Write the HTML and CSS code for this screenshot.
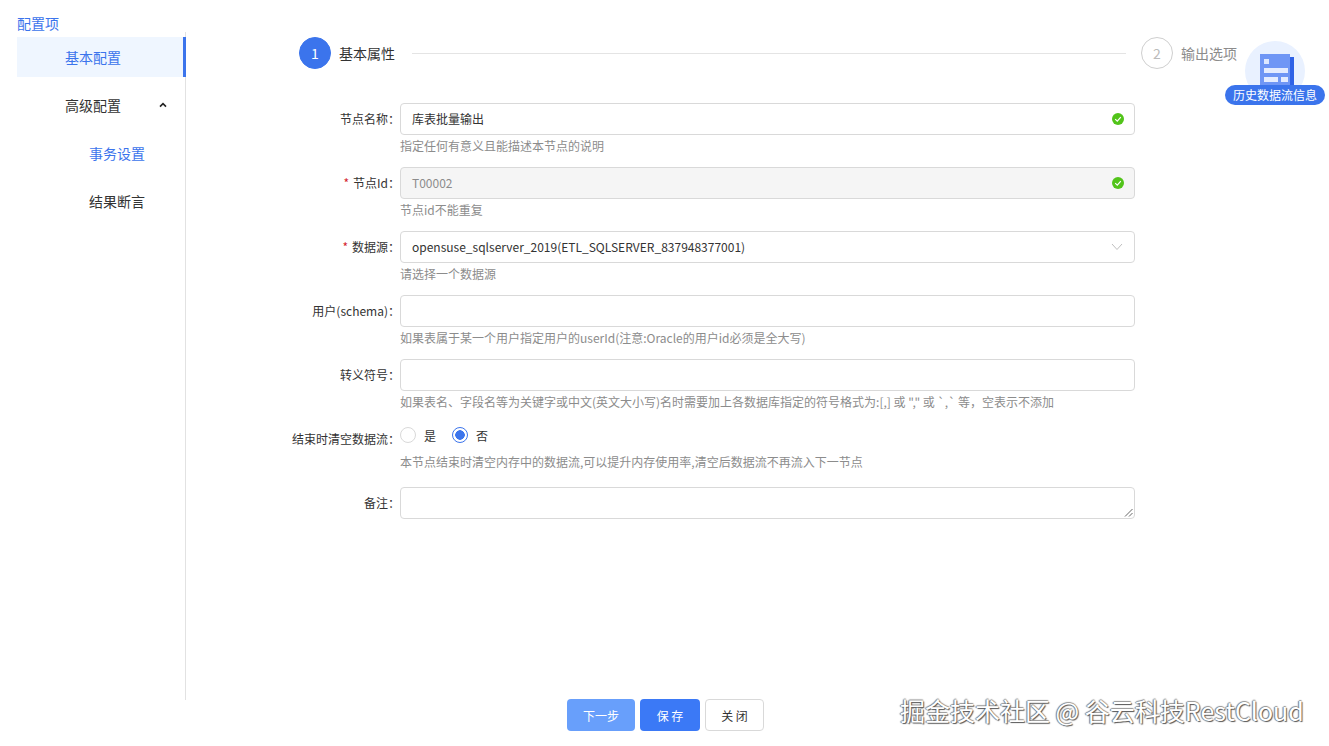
FILE: index.html
```html
<!DOCTYPE html>
<html>
  <head>
    <title>配置项</title>

    <link rel="stylesheet" href="styles.css">
  </head>

  <body>
    <div id="container">
      <aside class="sidebar">
        <div class="sidebarTitle">配置项</div>
        <nav class="menu">
          <div class="menuItem active">基本配置</div>
          <div class="menuItem">
            高级配置
            <svg class="caret" viewBox="0 0 8 6" width="8" height="6">
              <path d="M1 4.6 L4 1.6 L7 4.6" fill="none" stroke="#222" stroke-width="1.6"/>
            </svg>
          </div>
          <div class="menuItem sub current">事务设置</div>
          <div class="menuItem sub">结果断言</div>
        </nav>
      </aside>

      <main class="content">
        <div class="steps">
          <div class="stepNum on">1</div>
          <div class="stepText">基本属性</div>
          <div class="stepLine"></div>
          <div class="stepNum">2</div>
          <div class="stepText muted">输出选项</div>
        </div>

        <form class="form">
          <div class="row">
            <label class="label">节点名称：</label>
            <div class="field">
              <div class="input">库表批量输出
                <svg class="check" viewBox="0 0 12 12" width="12" height="12">
                  <circle cx="6" cy="6" r="6" fill="#52c41a"/>
                  <path d="M3.2 6.1 L5.3 8.1 L8.8 4.2" fill="none" stroke="#fff" stroke-width="1.2"/>
                </svg>
              </div>
              <div class="help">指定任何有意义且能描述本节点的说明</div>
            </div>
          </div>

          <div class="row">
            <label class="label"><span class="req">*</span>节点Id：</label>
            <div class="field">
              <div class="input disabled">T00002
                <svg class="check" viewBox="0 0 12 12" width="12" height="12">
                  <circle cx="6" cy="6" r="6" fill="#52c41a"/>
                  <path d="M3.2 6.1 L5.3 8.1 L8.8 4.2" fill="none" stroke="#fff" stroke-width="1.2"/>
                </svg>
              </div>
              <div class="help">节点id不能重复</div>
            </div>
          </div>

          <div class="row">
            <label class="label"><span class="req">*</span>数据源：</label>
            <div class="field">
              <div class="input">opensuse_sqlserver_2019(ETL_SQLSERVER_837948377001)
                <svg class="arrow" viewBox="0 0 12 8" width="12" height="8">
                  <path d="M1 1 L6 6.5 L11 1" fill="none" stroke="#bfbfbf" stroke-width="1"/>
                </svg>
              </div>
              <div class="help">请选择一个数据源</div>
            </div>
          </div>

          <div class="row">
            <label class="label">用户(schema)：</label>
            <div class="field">
              <div class="input"></div>
              <div class="help">如果表属于某一个用户指定用户的userId(注意:Oracle的用户id必须是全大写)</div>
            </div>
          </div>

          <div class="row">
            <label class="label">转义符号：</label>
            <div class="field">
              <div class="input"></div>
              <div class="help">如果表名、字段名等为关键字或中文(英文大小写)名时需要加上各数据库指定的符号格式为:[,] 或 "," 或 `,` 等，空表示不添加</div>
            </div>
          </div>

          <div class="row">
            <label class="label">结束时清空数据流：</label>
            <div class="field">
              <div class="radios">
                <span class="radio"></span><span class="radioText">是</span>
                <span class="radio checked"></span><span class="radioText">否</span>
              </div>
              <div class="help">本节点结束时清空内存中的数据流,可以提升内存使用率,清空后数据流不再流入下一节点</div>
            </div>
          </div>

          <div class="row">
            <label class="label">备注：</label>
            <div class="field">
              <div class="input textarea">
                <svg class="grip" viewBox="0 0 9 9" width="9" height="9">
                  <path d="M1 8.5 L8.5 1 M5 8.5 L8.5 5" stroke="#666" stroke-width="1"/>
                </svg>
              </div>
            </div>
          </div>
        </form>
      </main>
    </div>

    <div class="footer">
      <button class="btn next">下一步</button>
      <button class="btn save">保 存</button>
      <button class="btn close">关 闭</button>
    </div>

    <div class="history">
      <div class="historyCircle">
        <svg viewBox="0 0 36 36" width="36" height="36">
          <rect x="30" y="4" width="5" height="32" fill="#2f62e6"/>
          <rect x="1" y="1" width="30" height="35" fill="#6f96f5"/>
          <rect x="5" y="6" width="5" height="5" fill="#dce7ff"/>
          <rect x="5" y="15" width="24" height="5" fill="#e4ecff"/>
          <rect x="5" y="24" width="14" height="5" fill="#e4ecff"/>
          <rect x="22" y="24" width="7" height="5" fill="#e4ecff"/>
        </svg>
      </div>
      <div class="historyTag">历史数据流信息</div>
    </div>

    <div class="watermark">掘金技术社区 @ 谷云科技RestCloud</div>
  </body>
</html>
```

FILE: styles.css
```css
* {
  box-sizing: border-box;
}

html,
body {
  margin: 0px;
  padding: 0px;
  height: 100%;
  overflow: hidden;
}

body {
  font-family: "Noto Sans CJK SC", "Noto Sans", sans-serif;
  font-size: 12px;
  color: #333;
  background-color: #fff;
}

#container {
  display: flex;
  height: 700px;
}

.sidebar {
  width: 186px;
  padding: 14px 0 0 17px;
  flex-shrink: 0;
}

.sidebarTitle {
  font-size: 14px;
  line-height: 18px;
  color: #3b74ec;
}

.menu {
  height: 668px;
  padding-top: 5px;
  border-right: 1px solid #e2e2e2;
}

.menuItem {
  display: flex;
  align-items: center;
  justify-content: space-between;
  height: 40px;
  margin-bottom: 8px;
  padding: 0 18px 0 48px;
  font-size: 14px;
  color: #333;
}

.menuItem.sub {
  padding-left: 72px;
}

.menuItem.active {
  margin-right: -1px;
  color: #3b74ec;
  background-color: #eff6ff;
  border-right: 3px solid #3b74ec;
}

.menuItem.current {
  color: #3b74ec;
}

.content {
  flex: 1;
}

.steps {
  display: flex;
  align-items: center;
  width: 938px;
  margin: 37px 0 0 113px;
  font-size: 14px;
}

.stepNum {
  width: 32px;
  height: 32px;
  display: flex;
  align-items: center;
  justify-content: center;
  border: 1px solid #cfcfcf;
  border-radius: 50%;
  color: #bbb;
  flex-shrink: 0;
}

.stepNum.on {
  background-color: #3b74ec;
  border-color: #3b74ec;
  color: #fff;
}

.stepText {
  margin-left: 8px;
  color: #333;
  white-space: nowrap;
}

.stepText.muted {
  color: #8c8c8c;
}

.stepLine {
  flex: 1;
  height: 1px;
  margin: 0 15px 0 17px;
  background-color: #e4e4e4;
}

.form {
  margin-top: 34px;
}

.row {
  display: flex;
  height: 64px;
}

.label {
  width: 214px;
  height: 32px;
  line-height: 32px;
  text-align: right;
  white-space: nowrap;
  color: #333;
}

.req {
  margin-right: 4px;
  color: #d4232f;
}

.field {
  width: 735px;
}

.input {
  position: relative;
  height: 32px;
  line-height: 30px;
  padding: 0 11px;
  border: 1px solid #d9d9d9;
  border-radius: 4px;
  color: #333;
}

.input.disabled {
  background-color: #f5f5f5;
  color: #8c8c8c;
}

.check {
  position: absolute;
  right: 10px;
  top: 9px;
}

.arrow {
  position: absolute;
  right: 11px;
  top: 11px;
}

.grip {
  position: absolute;
  right: 1px;
  bottom: 1px;
}

.help {
  height: 22px;
  line-height: 22px;
  margin-top: 0px;
  color: #8c8c8c;
  white-space: nowrap;
}

.radios {
  display: flex;
  align-items: center;
  height: 24px;
}

.radio {
  width: 16px;
  height: 16px;
  border: 1px solid #d9d9d9;
  border-radius: 50%;
  flex-shrink: 0;
}

.radio.checked {
  border-color: #3b74ec;
  background: radial-gradient(circle, #3b74ec 0 4.5px, #fff 5px);
}

.radioText {
  margin: 0 16px 0 8px;
  width: 12px;
}

.radios + .help {
  margin-top: 4px;
}

.footer {
  display: flex;
  gap: 5px;
  padding: 0 0 0 567px;
  margin-top: -1px;
}

.btn {
  height: 32px;
  border: 1px solid transparent;
  border-radius: 4px;
  font-family: inherit;
  font-size: 12px;
  color: #fff;
}

.btn.next {
  width: 68px;
  background-color: #689ffb;
}

.btn.save {
  width: 60px;
  background-color: #3b79f6;
}

.btn.close {
  width: 59px;
  background-color: #fff;
  border-color: #d9d9d9;
  color: #333;
}

.history {
  position: absolute;
  left: 1225px;
  top: 41px;
  width: 100px;
  height: 64px;
}

.historyCircle {
  width: 60px;
  height: 60px;
  margin-left: 20px;
  padding: 12px 0 0 14px;
  overflow: hidden;
  background-color: #e9f1ff;
  border-radius: 50%;
}

.historyTag {
  position: absolute;
  left: 0;
  top: 44px;
  width: 100px;
  height: 20px;
  line-height: 20px;
  text-align: center;
  color: #fff;
  background-color: #3b74ec;
  border-radius: 10px;
}

.watermark {
  position: absolute;
  left: 900px;
  top: 692px;
  font-size: 25px;
  line-height: 36px;
  white-space: nowrap;
  color: #fff;
  text-shadow: 1px 1px 1px #555, -1px 0 1px #777, 0 -1px 1px #999;
}
```
